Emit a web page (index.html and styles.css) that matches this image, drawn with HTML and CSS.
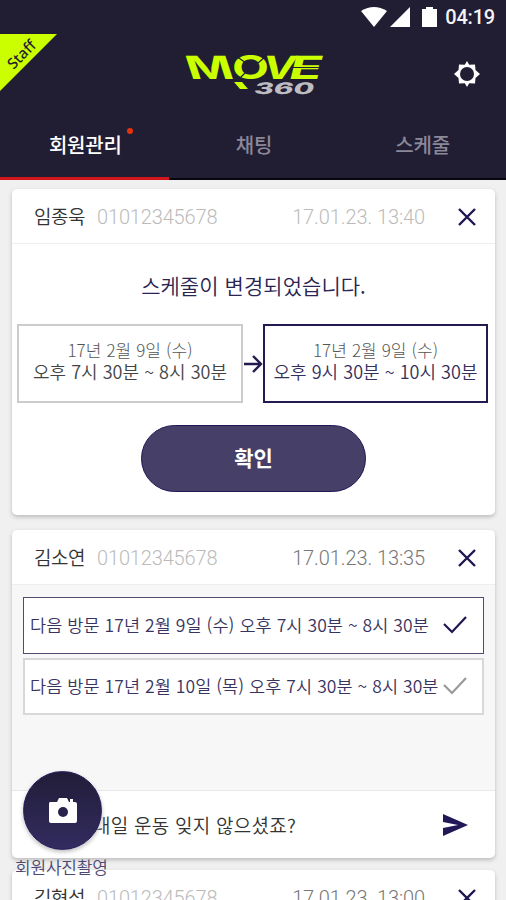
FILE: index.html
```
<!DOCTYPE html>
<html lang="ko">
<head>
<meta charset="utf-8">
<title>MOVE 360</title>
<link rel="stylesheet" href="styles.css">
</head>
<body>
<div class="app">
  <header class="header">
    <div class="status">
      <svg class="wifi" viewBox="0 0 26 20"><path d="M0 4Q13-4 26 4L13 20Z"/></svg>
      <svg class="signal" viewBox="0 0 20 20"><path d="M0 20L20 0V20Z"/></svg>
      <svg class="battery" viewBox="0 0 15 20"><path d="M4 2V0H11V2H15V20H0V2Z"/></svg>
      <span class="clock">04:19</span>
    </div>
    <div class="staff"><span>Staff</span></div>
    <div class="brand">
      <svg class="logo" viewBox="0 0 142 44">
        <g class="logo-move">
          <text transform="translate(6 24) skewX(18)" textLength="46" lengthAdjust="spacingAndGlyphs">M</text>
          <text transform="translate(48 24)" textLength="37" lengthAdjust="spacingAndGlyphs">O</text>
          <text transform="translate(77 24) skewX(-12)" textLength="33" lengthAdjust="spacingAndGlyphs">V</text>
          <text transform="translate(103 24) skewX(-14)" textLength="33" lengthAdjust="spacingAndGlyphs">E</text>
        </g>
        <path class="logo-accent" d="M50 27H58L64 34H56Z"/>
        <path class="logo-cut" d="M52 1L62 8M62 17L54 25M82 1L74 8M108 12.500H136"/>
        <text class="logo-360" transform="translate(69 38.500) skewX(-15)" textLength="60" lengthAdjust="spacingAndGlyphs">360</text>
      </svg>
      <svg class="gear" viewBox="0 0 26 26"><path d="M13 0L15.200 3.800L21 3.500L21.500 9L26 13L21.500 17L21 22.500L15.200 22.200L13 26L10.800 22.200L5 22.500L4.500 17L0 13L4.500 9L5 3.500L10.800 3.800Z"/><circle cx="13" cy="13" r="7"/></svg>
    </div>
    <nav class="tabs">
      <div class="tab active"><span>회원관리<i class="dot"></i></span></div>
      <div class="tab"><span>채팅</span></div>
      <div class="tab"><span>스케줄</span></div>
    </nav>
  </header>
  <main class="feed">
    <section class="card change">
      <div class="card-head">
        <span class="name">임종욱</span><span class="phone">01012345678</span><time class="pale">17.01.23. 13:40</time>
        <svg class="close" viewBox="0 0 18 18"><path d="M1 1L17 17M17 1L1 17"/></svg>
      </div>
      <p class="message">스케줄이 변경되었습니다.</p>
      <div class="slots">
        <div class="slot"><span class="day">17년 2월 9일 (수)</span><span class="hours">오후 7시 30분 ~ 8시 30분</span></div>
        <svg class="arrow" viewBox="0 0 20 20"><path d="M1 10H18M10 2L18 10L10 18"/></svg>
        <div class="slot next"><span class="day">17년 2월 9일 (수)</span><span class="hours">오후 9시 30분 ~ 10시 30분</span></div>
      </div>
      <button class="confirm">확인</button>
    </section>
    <section class="card visit">
      <div class="card-head">
        <span class="name">김소연</span><span class="phone">01012345678</span><time>17.01.23. 13:35</time>
        <svg class="close" viewBox="0 0 18 18"><path d="M1 1L17 17M17 1L1 17"/></svg>
      </div>
      <div class="options">
        <div class="option selected"><span>다음 방문 17년 2월 9일 (수) 오후 7시 30분 ~ 8시 30분</span>
          <svg class="check" viewBox="0 0 24 18"><path d="M1 8L9 16L23 1"/></svg></div>
        <div class="option"><span>다음 방문 17년 2월 10일 (목) 오후 7시 30분 ~ 8시 30분</span>
          <svg class="check" viewBox="0 0 24 18"><path d="M1 8L9 16L23 1"/></svg></div>
      </div>
      <div class="reply"><span>내일 운동 잊지 않으셨죠?</span>
        <svg class="send" viewBox="0 0 25 22"><path d="M0 0L25 11L0 22V14L15 11L0 8Z"/></svg></div>
    </section>
    <section class="card">
      <div class="card-head">
        <span class="name">김현석</span><span class="phone">01012345678</span><time>17.01.23. 13:00</time>
        <svg class="close" viewBox="0 0 18 18"><path d="M1 1L17 17M17 1L1 17"/></svg>
      </div>
    </section>
  </main>
  <div class="camera">
    <div class="fab"><svg viewBox="0 0 28 25"><path d="M1 4H8L10 0H18L20 4H21V1H24V4H26Q28 4 28 6V23Q28 25 26 25H2Q0 25 0 23V6Q0 4 1 4Z"/><circle cx="14" cy="14" r="5"/></svg></div>
    <span class="caption">회원사진촬영</span>
  </div>
</div>
</body>
</html>
```
FILE: styles.css
```
* { box-sizing: border-box; }
body { margin: 0; font-family: "Noto Sans CJK KR", sans-serif; color: #333; }
svg { display: block; flex: none; }
.app { position: relative; width: 506px; height: 900px; overflow: hidden; background: #f0f0f1; }

.header { position: relative; height: 180px; background: #211d33; }
.status { display: flex; height: 34px; padding: 7px 11px 0 0; justify-content: flex-end; align-items: flex-start; }
.status svg { fill: #fff; height: 20px; }
.wifi { width: 26px; margin-right: 3px; }
.signal { width: 20px; margin-right: 12px; }
.battery { width: 15px; margin-right: 8px; }
.clock { font: 500 20px/21px Roboto, sans-serif; color: #f4f4f6; letter-spacing: -.2px; }
.staff { position: absolute; left: 0; top: 34px; width: 57px; height: 57px; background: #cbff00; clip-path: polygon(0 0, 100% 0, 0 100%); }
.staff span { position: absolute; left: -9px; top: 11px; width: 60px; text-align: center; font: 500 15px/18px "Noto Sans", sans-serif; color: #211d33; transform: rotate(-45deg); }
.brand { display: flex; height: 80px; padding: 21px 26px 0 184px; justify-content: space-between; align-items: flex-start; }
.logo { width: 142px; height: 44px; overflow: visible; }
.logo-move { font: 700 32px Inter, sans-serif; fill: #cbff00; }
.logo-accent { fill: #cbff00; }
.logo-cut { stroke: #211d33; stroke-width: 1.2; fill: none; }
.logo-360 { font: 800 16px Inter, sans-serif; fill: #bdbdc2; }
.gear { width: 26px; height: 26px; margin-top: 6px; fill: #fff; }
.gear circle { fill: #211d33; }
.tabs { display: grid; grid-template-columns: repeat(3, 1fr); height: 66px; border-bottom: 2px solid #07060d; }
.tab { display: flex; height: 66px; justify-content: center; padding: 16px 0 0 2px; font-size: 20px; line-height: 30px; color: #8b889a; letter-spacing: -.2px; font-weight: 500; }
.tab.active { color: #fff; border-bottom: 3px solid #d3151e; }
.tab > span { position: relative; }
.dot { position: absolute; right: -11px; top: -2px; width: 6px; height: 6px; border-radius: 50%; background: #e5330d; }

.feed { padding: 9px 11px 0 12px; }
.card { height: 326px; margin-bottom: 15px; background: #fff; border-radius: 5px; box-shadow: 0 2px 4px #bbb; overflow: hidden; }
.visit { height: 328px; margin-bottom: 12px; }
.card-head { display: flex; height: 55px; align-items: center; padding: 0 19px 0 22px; border-bottom: 1px solid #eee; }
.name { width: 63px; font-size: 19px; line-height: 28px; letter-spacing: -.5px; color: #333; font-weight: 350; }
.phone, time { font: 300 20px/28px Roboto, sans-serif; padding-top: 1px; }
.phone { color: #bbb; letter-spacing: -.15px; }
time { margin: 0 33px 0 auto; color: #777; letter-spacing: -.1px; }
.card-head .pale { color: #bbb; }
.close { width: 18px; height: 18px; margin-top: 1px; fill: none; stroke: #1d1650; stroke-width: 2.4; }
.message { margin: 26px 0 0; text-align: center; font-size: 21px; line-height: 30px; color: #292452; letter-spacing: .05px; font-weight: 350; }
.slots { display: flex; align-items: center; padding: 0 7px 0 5px; margin-top: 24px; }
.slot { display: flex; flex-direction: column; align-items: center; width: 226px; height: 79px; padding-top: 13px; border: 2px solid #ccc; white-space: nowrap; }
.slot.next { width: 225px; border-color: #211b50; }
.day { font-size: 17px; line-height: 22px; font-weight: 300; color: #555; letter-spacing: .1px; }
.hours { font-size: 18px; line-height: 22px; margin-top: -1px; color: #444; letter-spacing: .02px; font-weight: 350; }
.next .hours { color: #342f5b; }
.arrow { width: 20px; height: 20px; fill: none; stroke: #211b50; stroke-width: 2.3; }
.confirm { display: block; width: 225px; height: 67px; margin: 22px auto 0 129px; padding: 0 0 3px; border: 1px solid #211858; border-radius: 34px; background: #463f67; color: #fff; font: 700 21px/30px "Noto Sans CJK KR", sans-serif; }

.options { height: 206px; padding: 12px 11px; background: #f7f7f7; border-bottom: 1px solid #e8e8e8; }
.option { display: flex; align-items: center; justify-content: space-between; height: 57px; margin-bottom: 4px; padding: 0 15px 2px 5px; border: 2px solid #d8d8d8; background: #fff; font-size: 17.5px; line-height: 26px; letter-spacing: .06px; white-space: nowrap; color: #39345f; font-weight: 350; }
.selected { border: 1px solid #514b72; padding: 0 16px 2px 6px; }
.check { width: 24px; height: 18px; fill: none; stroke: #999; stroke-width: 2.2; }
.selected .check { stroke: #1d1650; }
.reply { display: flex; height: 67px; align-items: center; justify-content: space-between; padding: 0 27px 0 81px; font-size: 19px; letter-spacing: .25px; color: #333; font-weight: 350; }
.send { width: 25px; height: 22px; fill: #211858; }
.camera { position: absolute; left: 15px; top: 771px; }
.fab { display: flex; align-items: center; justify-content: center; width: 79px; height: 79px; margin-left: 8px; border-radius: 50%; background: linear-gradient(#211d38, #332c60); border: 1px solid #211858; box-shadow: 0 2px 4px #bbb; }
.fab svg { width: 28px; height: 25px; fill: #fff; }
.fab circle { fill: #29234b; }
.caption { display: block; margin-top: 5px; font-size: 17px; line-height: 24px; color: #4d4872; letter-spacing: -.2px; white-space: nowrap; font-weight: 350; }
```
